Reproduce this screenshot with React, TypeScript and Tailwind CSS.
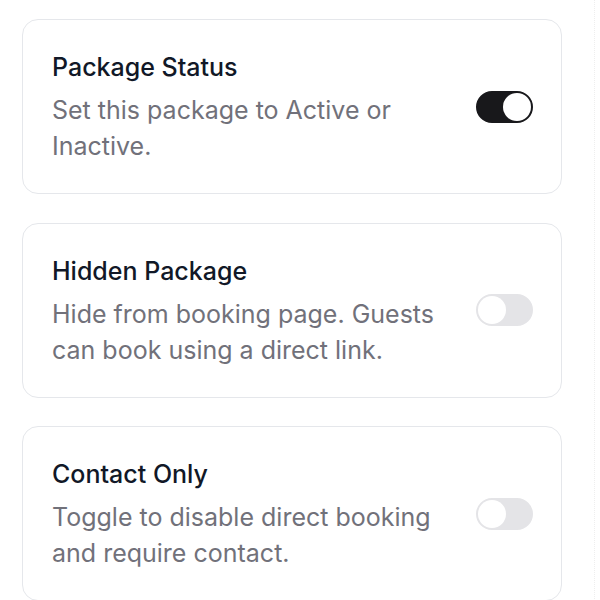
// Package settings — three toggle cards stacked in a column.

type Setting = {
  title: string;
  description: string;
  enabled: boolean;
};

const SETTINGS: Setting[] = [
  {
    title: "Package Status",
    description: "Set this package to Active or Inactive.",
    enabled: true,
  },
  {
    title: "Hidden Package",
    description: "Hide from booking page. Guests can book using a direct link.",
    enabled: false,
  },
  {
    title: "Contact Only",
    description: "Toggle to disable direct booking and require contact.",
    enabled: false,
  },
];

function Toggle({ on }: { on: boolean }) {
  return (
    <div
      role="switch"
      aria-checked={on}
      className={
        on
          ? "flex h-[32px] w-[57px] shrink-0 items-center justify-end rounded-full border-2 border-[#18181b] bg-[#18181b]"
          : "flex h-[32px] w-[57px] shrink-0 items-center justify-start rounded-full border-2 border-[#e4e4e7] bg-[#e4e4e7]"
      }
    >
      <span className="block h-[28px] w-[28px] rounded-full bg-white" />
    </div>
  );
}

export default function App() {
  return (
    <div
      className="flex min-h-[600px] w-[600px] overflow-hidden bg-white"
      style={{ fontFamily: "Inter, 'Noto Sans', sans-serif" }}
    >
      <div className="flex w-[594px] flex-col gap-[28.5px] pl-[22px] pr-[32px] pt-[19px]">
        {SETTINGS.map((s) => (
          <div
            key={s.title}
            className="flex h-[175px] shrink-0 items-center gap-[24px] rounded-[16px] border border-[#e5e7eb] bg-white pl-[29px] pr-[28px]"
          >
            <div className="flex-1">
              <h3 className="text-[25px] font-medium leading-[36px] text-[#111827]">
                {s.title}
              </h3>
              <p className="mt-[7px] text-[25px] leading-[36px] text-[#71717a]">
                {s.description}
              </p>
            </div>
            <Toggle on={s.enabled} />
          </div>
        ))}
      </div>
      <div className="w-0 border-l border-dotted border-[#eeeeee]" />
    </div>
  );
}
